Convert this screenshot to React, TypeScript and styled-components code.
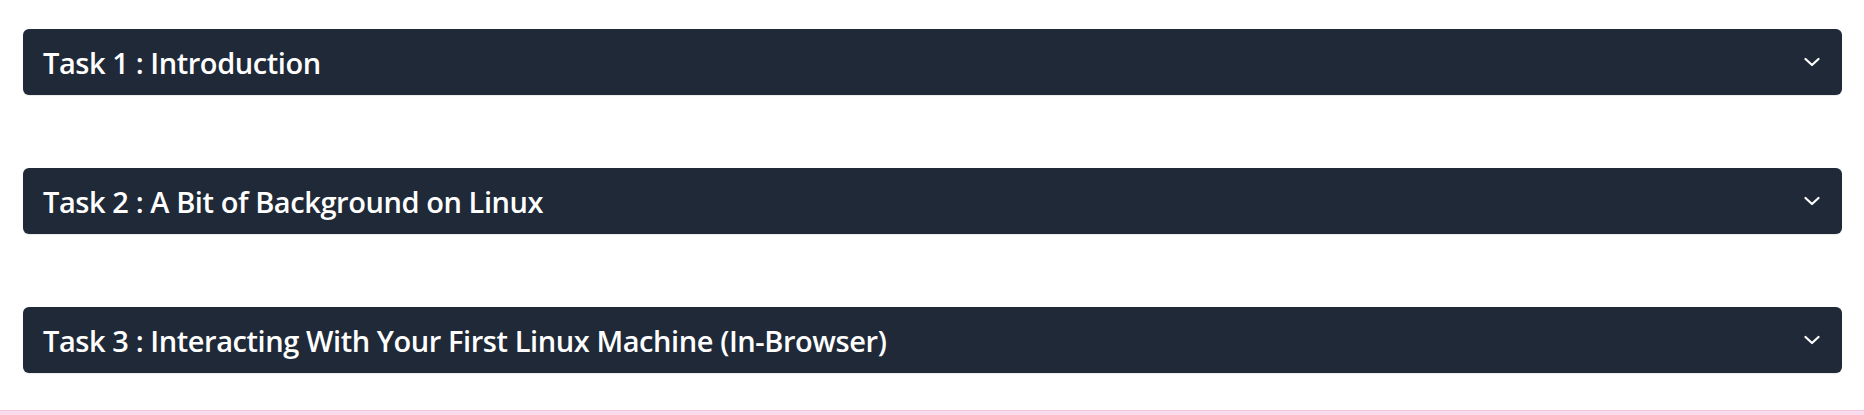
import React from "react";
import styled, { createGlobalStyle } from "styled-components";

const GlobalStyle = createGlobalStyle`
  html, body {
    margin: 0;
    padding: 0;
    background: #ffffff;
  }
  body {
    font-family: "Open Sans", "Noto Sans", sans-serif;
  }
`;

const Page = styled.div`
  width: 1864px;
  height: 415px;
  display: flex;
  flex-direction: column;
  box-sizing: border-box;
  overflow: hidden;
`;

const List = styled.div`
  display: flex;
  flex-direction: column;
  gap: 73px;
  padding: 29px 22px 0 23px;
  flex: 1;
`;

const TaskBar = styled.button`
  display: flex;
  align-items: center;
  justify-content: space-between;
  height: 66px;
  width: 100%;
  box-sizing: border-box;
  padding: 0 22px 0 20px;
  border: none;
  border-radius: 6px;
  background: #1f2937;
  color: #ffffff;
  box-shadow: 0 1px 1px rgba(0, 0, 0, 0.08);
  cursor: pointer;
  text-align: left;
`;

const Title = styled.span`
  font-family: "Open Sans", "Noto Sans", sans-serif;
  font-weight: 600;
  font-size: 29px;
  letter-spacing: -0.42px;
  line-height: 1;
  padding-top: 1px;
`;

const Chevron = styled.svg`
  width: 16px;
  height: 10px;
  flex: none;
`;

const BottomStrip = styled.div`
  height: 5px;
  background: #fbdcef;
  border-top: 1px solid #ebcadf;
  box-sizing: border-box;
`;

const tasks = [
  "Task 1 : Introduction",
  "Task 2 : A Bit of Background on Linux",
  "Task 3 : Interacting With Your First Linux Machine (In-Browser)",
];

export default function App() {
  return (
    <>
      <GlobalStyle />
      <Page>
        <List>
          {tasks.map((t) => (
            <TaskBar key={t} type="button">
              <Title>{t}</Title>
              <Chevron viewBox="0 0 16 10" fill="none">
                <polyline
                  points="1.5,2 8,8 14.5,2"
                  stroke="#ffffff"
                  strokeWidth="2.2"
                  strokeLinecap="round"
                  strokeLinejoin="round"
                />
              </Chevron>
            </TaskBar>
          ))}
        </List>
        <BottomStrip />
      </Page>
    </>
  );
}
